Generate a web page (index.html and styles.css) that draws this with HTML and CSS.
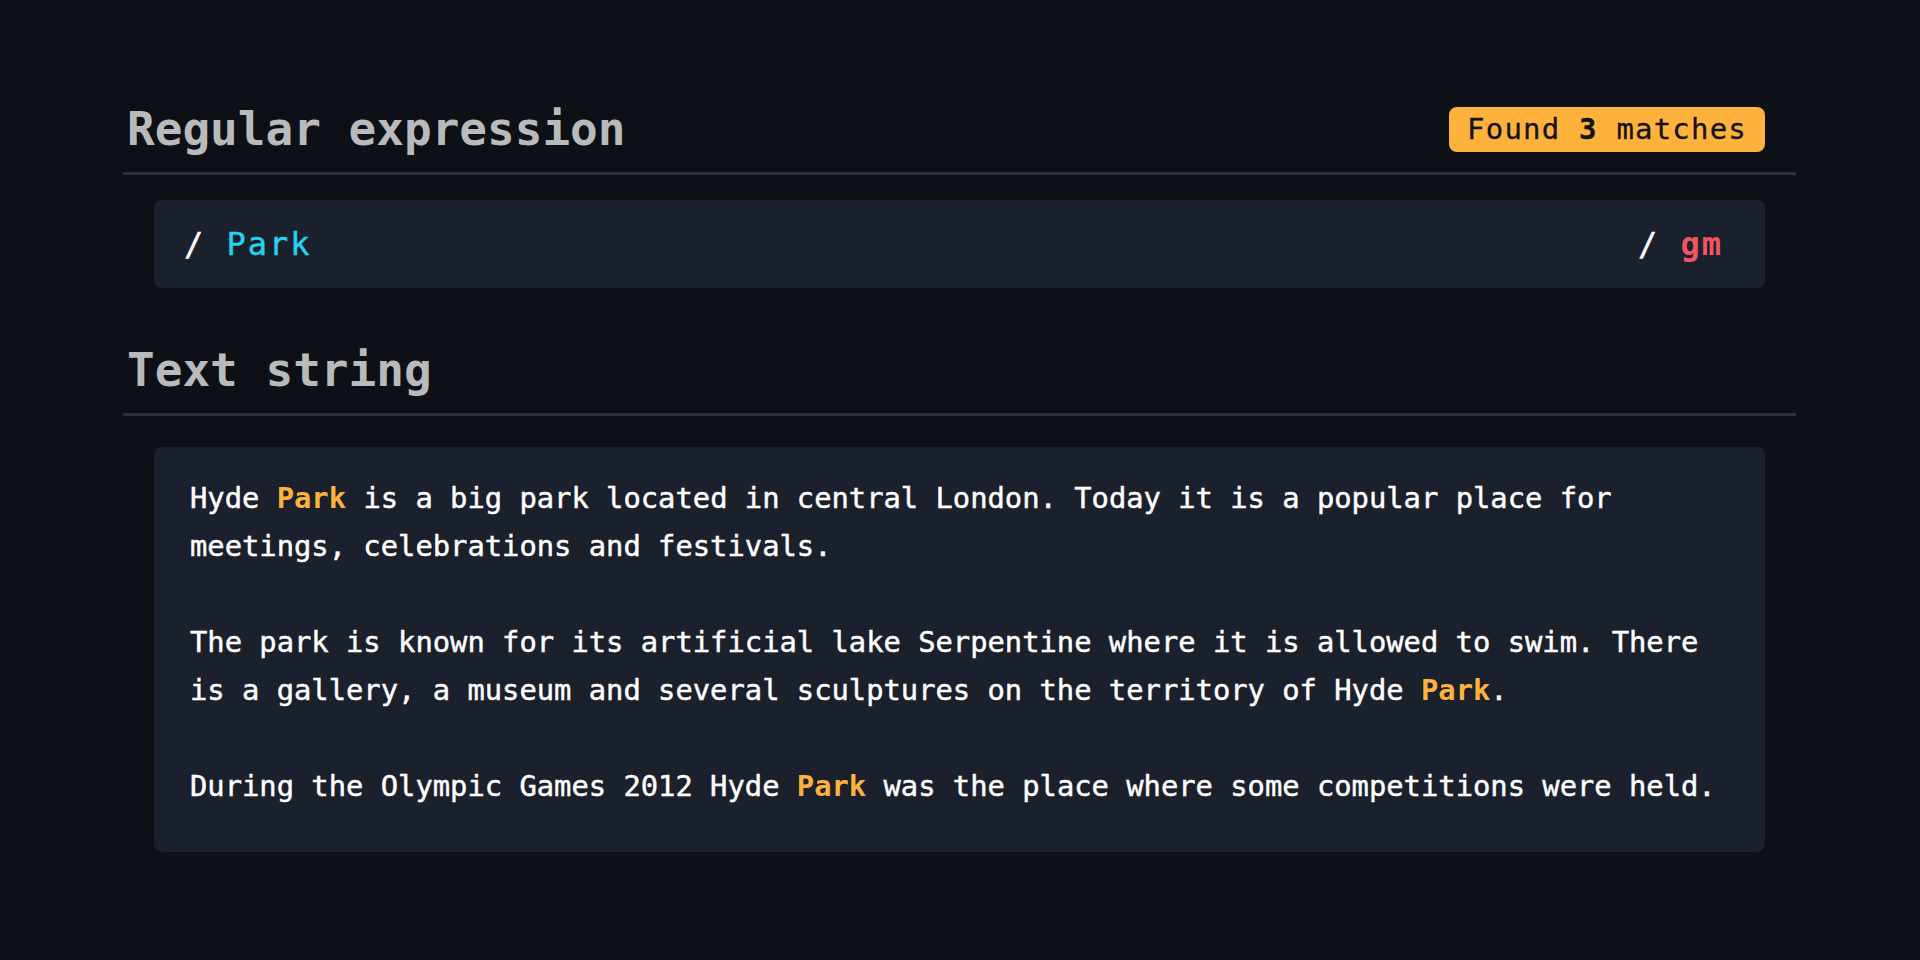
FILE: index.html
```html
<!DOCTYPE html>
<html lang="en">
<head>
<meta charset="utf-8">
<title>Regex tester</title>
<link rel="stylesheet" href="styles.css">
</head>
<body>
<main class="page">
  <section class="section section-regex">
    <header class="section-header">
      <h2 class="section-title">Regular expression</h2>
      <div class="badge">Found <b>3</b> matches</div>
    </header>
    <div class="panel regex-panel">
      <div class="regex-left"><span class="slash">/</span> <span class="pattern">Park</span></div>
      <div class="regex-right"><span class="slash">/</span> <span class="flags">gm</span></div>
    </div>
  </section>

  <section class="section section-text">
    <header class="section-header">
      <h2 class="section-title">Text string</h2>
    </header>
    <div class="panel text-panel">
      <p>Hyde <mark class="match">Park</mark> is a big park located in central London. Today it is a popular place for<br>meetings, celebrations and festivals.</p>
      <p>The park is known for its artificial lake Serpentine where it is allowed to swim. There<br>is a gallery, a museum and several sculptures on the territory of Hyde <mark class="match">Park</mark>.</p>
      <p>During the Olympic Games 2012 Hyde <mark class="match">Park</mark> was the place where some competitions were held.</p>
    </div>
  </section>
</main>
</body>
</html>
```

FILE: styles.css
```css
* {
  box-sizing: border-box;
}

html, body {
  margin: 0;
  padding: 0;
  background: #0d1017;
}

body {
  font-family: "DejaVu Sans Mono", "Liberation Mono", monospace;
  color: #ffffff;
  width: 1920px;
  height: 960px;
  overflow: hidden;
}

.page {
  padding: 102px 0 0 123px;
  width: 1796px;
}

.section-header {
  display: flex;
  align-items: center;
  justify-content: space-between;
  padding-bottom: 16px;
  border-bottom: 3px solid #2d3035;
}

.section-title {
  margin: 0;
  padding-left: 4px;
  font-size: 46px;
  line-height: 54px;
  font-weight: bold;
  color: #b9babb;
}

.badge {
  margin-right: 31px;
  height: 45px;
  line-height: 45px;
  padding: 0 18px;
  border-radius: 8px;
  background: #ffb23b;
  color: #121212;
  font-size: 29px;
  letter-spacing: 1.2px;
  white-space: nowrap;
  -webkit-text-stroke: 0.3px #121212;
}

.badge b {
  font-weight: bold;
}

.panel {
  margin: 0 31px;
  background: #1b202d;
  border-radius: 8px;
}

.regex-panel {
  margin-top: 25px;
  height: 88px;
  display: flex;
  align-items: center;
  justify-content: space-between;
  padding: 0 42px 0 30px;
  font-size: 32px;
  letter-spacing: 2px;
  white-space: pre;
}

.slash {
  color: #ffffff;
  -webkit-text-stroke: 0.4px #ffffff;
}

.pattern {
  color: #27d3f2;
  -webkit-text-stroke: 0.4px #27d3f2;
}

.flags {
  color: #f25560;
  font-weight: bold;
}

.section-text {
  margin-top: 55px;
}

.text-panel {
  margin-top: 31px;
  padding: 27px 36px 42px 36px;
  font-size: 28.8px;
  line-height: 48px;
  white-space: nowrap;
  -webkit-text-stroke: 0.45px #ffffff;
}

.text-panel p {
  margin: 0;
}

.text-panel p + p {
  margin-top: 48px;
}

.match {
  background: none;
  color: #ffb23b;
  font-weight: bold;
  -webkit-text-stroke: 0;
}
```
